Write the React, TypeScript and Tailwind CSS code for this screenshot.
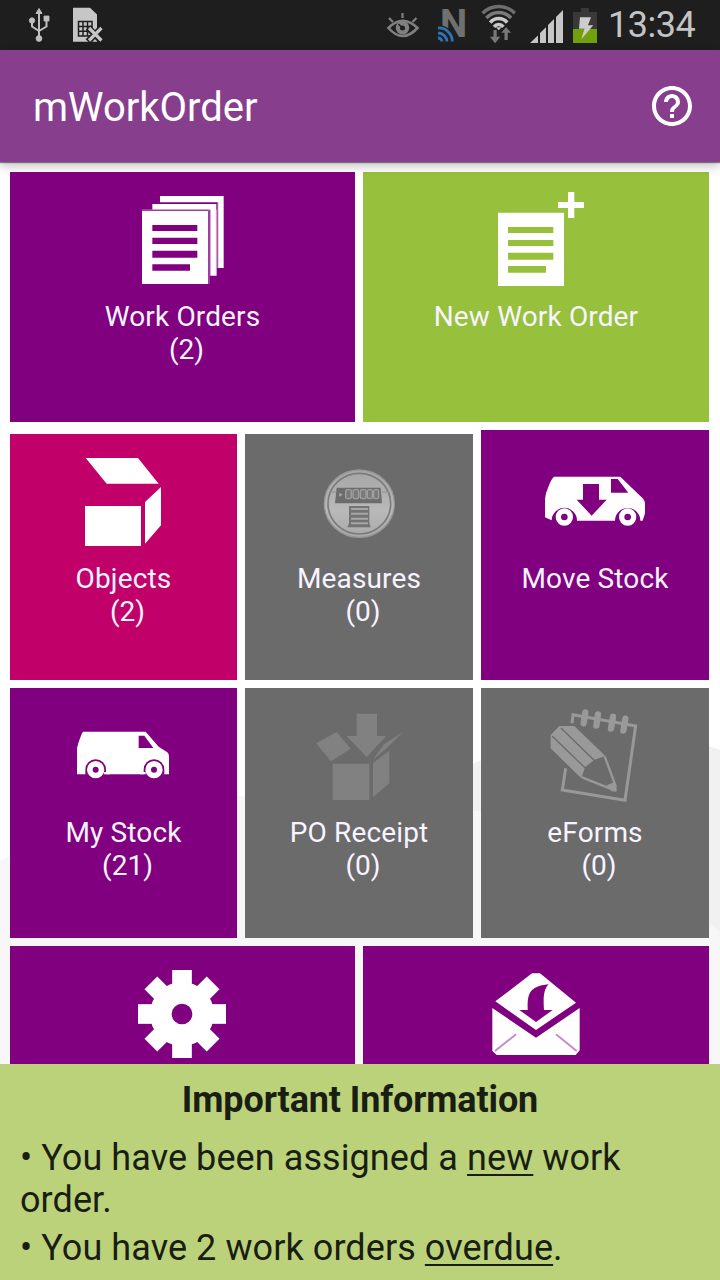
import type { ReactNode } from "react";

const THIRD = 1 / 3;

type ArtProps = { x: number; y: number; w: number; ox: number; oy: number; children: ReactNode };

/* Tile artwork, drawn at three units per pixel from the origin (ox, oy). */
function Art({ x, y, w, ox, oy, children }: ArtProps) {
  return (
    <svg className="block h-[120px] w-full shrink-0" viewBox={`${x} ${y} ${w} 120`} aria-hidden="true">
      <g transform={`translate(${ox} ${oy}) scale(${THIRD})`}>{children}</g>
    </svg>
  );
}

type TileProps = { className: string; label?: string; count?: number; tall?: boolean; art: ReactNode };

function Tile({ className, label, count, tall, art }: TileProps) {
  return (
    <button type="button" className={`flex flex-col items-stretch overflow-hidden text-center ${className}`}>
      {art}
      <span
        className={`block whitespace-nowrap text-[28px] leading-[33px] tracking-[0.15px] text-[#f8f4ff] ${tall ? "mt-[12px]" : "mt-[8px]"}`}
      >
        {label && <span className="block">{label}</span>}
        {count !== undefined && <span className="block pl-px tracking-normal">{"\u00a0"}({count})</span>}
      </span>
    </button>
  );
}

function StatusIcons() {
  return (
    <svg className="h-[50px] w-[230px]" viewBox="375 0 230 50" aria-hidden="true">
      <g stroke="#808080" fill="none" strokeWidth="2.6">
        <path d="M388.500 28 Q402.500 13.500 417.500 28 Q402.500 44 388.500 28Z" />
        <circle cx="402.500" cy="27.700" r="6.800" fill="#808080" stroke="none" />
        <path d="M389 18 l4 4 M402.500 13 v5 M416.500 18 l-4 4" strokeWidth="2.2" />
        <circle cx="402.500" cy="28" r="2.500" fill="#1e1e1e" stroke="none" />
        <path d="M398.500 24 l4 4" stroke="#1e1e1e" strokeWidth="1.600" />
      </g>
      <text x="440" y="36.500" fontSize="38.500" fontWeight="700" fill="#707070" fontFamily="Roboto, sans-serif">
        N
      </text>
      <path d="M437 25 A17 17 0 0 1 455 42 H437Z" fill="#1e1e1e" />
      <g fill="none" stroke="#2f73b5" strokeWidth="2.800">
        <path d="M438 28 A13.500 13.500 0 0 1 452.300 41.500" />
        <path d="M438 33 A8.800 8.800 0 0 1 447 41.500" />
        <path d="M438 38 A3.800 3.800 0 0 1 442 41.500" />
      </g>
      <g fill="none" strokeWidth="3.500">
        <path d="M482.600 13.200 A22.500 22.500 0 0 1 514.800 13.200" stroke="#6e6e6e" />
        <path d="M486.400 18 A16.500 16.500 0 0 1 511 18" stroke="#7a7a7a" />
        <path d="M490.200 22.600 A11 11 0 0 1 507.200 22.600" stroke="#c8c8c8" />
        <path d="M494 26.800 A6 6 0 0 1 503.400 26.800" stroke="#c8c8c8" />
      </g>
      <path d="M496 27.200 h5.600 l-2.800 3z" fill="#c8c8c8" />
      <path d="M493.500 30 h3.200 v6.800 h3.600 l-5.200 6.400 l-5.200 -6.400 h3.600z M504.500 40 h3.200 v-7.200 h3.200 l-4.800 -5.800 l-4.800 5.800 h3.200z" fill="#787878" />
      <path d="M530 43 L538 35.500 V43Z M540 43 V33 L546 27.200 V43Z M548 43 V25 L554 19 V43Z M556 43 V17 L563 10 V43Z" fill="#c6c6c6" />
      <path d="M573 12 h8 v-4 h8 v4 h8 v17 h-24z" fill="#393939" />
      <path d="M573 29 h24 v14 h-24z" fill="#72a00b" />
      <path d="M580 17.300 h11 l-3 8 h5.300 L581.300 39.300 l3.200 -10.600 h-5.500z" fill="#cdcdcd" />
    </svg>
  );
}

function UsbAndSim() {
  return (
    <svg className="h-[50px] w-[105px]" viewBox="0 0 105 50" aria-hidden="true">
      <g fill="#bfbfbf" stroke="#bfbfbf">
        <path d="M39 12 V37 M32 22 V26.500 L39 31 M46.500 20 V26.500 L39 31" fill="none" strokeWidth="2" />
        <path d="M39 8.500 l3 5 h-6z" strokeWidth="1" />
        <circle cx="32" cy="20.500" r="2.700" strokeWidth=".8" />
        <path d="M44 16 h5 v5 h-5z" strokeWidth=".8" />
        <circle cx="39" cy="38.500" r="2.900" strokeWidth=".8" />
      </g>
      <path d="M73 7.700 H90 L97 14.500 V41.700 H73Z" fill="#c6c6c6" />
      <path d="M78.500 21.500 h13.500 v14.500 h-13.500z M78.500 26.500 h13 M78.500 31.300 h13 M83 21.500 v14.500 M87.500 21.500 v14.500" fill="none" stroke="#1e1e1e" strokeWidth="1.500" />
      <path d="M88 27.500 L102 41.500 M102 27.500 L88 41.500" stroke="#1e1e1e" strokeWidth="6.500" />
      <path d="M89 28 L101.500 40.500 M101.500 28 L89 40.500" stroke="#c6c6c6" strokeWidth="3.200" />
    </svg>
  );
}

function WorkOrdersArt() {
  return (
    <Art x={10} y={172} w={345} ox={90} oy={180}>
      <path d="M210 48 H401 V264 H384 V67 H210Z M187 72 H379 V287 H361 V89 H187Z" fill="#fff" />
      <path d="M156 90 H357 V312" fill="none" stroke="#c07ac0" strokeWidth="3" />
      <path d="M384 67 V264 M379 89 V287" stroke="#d9aed9" strokeWidth="3" />
      <path d="M156 93 H354 V312 H156Z" fill="#fff" />
      <path d="M187 135 H322 V153 H187Z M187 173 H322 V192 H187Z M187 212 H322 V233 H187Z M187 253 H300 V272 H187Z" fill="#800080" />
    </Art>
  );
}

function NewOrderArt() {
  return (
    <Art x={363} y={172} w={346} ox={420} oy={180}>
      <path d="M234 98 H432 V318 H234Z M414 66 H444 V36 H463 V66 H492 V84 H463 V114 H444 V84 H414Z" fill="#fff" />
      <path d="M264 141 H400 V159 H264Z M264 180 H400 V198 H264Z M264 218 H400 V239 H264Z M264 258 H378 V278 H264Z" fill="#97c13c" />
    </Art>
  );
}

function ObjectsArt() {
  return (
    <Art x={10} y={434} w={227} ox={50} oy={430}>
      <path d="M107 84 H264 L326 161 H170Z M105 228 H273 V348 H105Z M285 216 L333 171 V286 L285 341Z" fill="#fff" />
    </Art>
  );
}

function MeasuresArt() {
  return (
    <Art x={245} y={434} w={228} ox={280} oy={430}>
      <defs>
        <linearGradient id="dial" x1="0" y1="0" x2="0" y2="1">
          <stop offset="0" stopColor="#a6a6a6" />
          <stop offset=".6" stopColor="#b9b9b9" />
          <stop offset="1" stopColor="#a9a9a9" />
        </linearGradient>
      </defs>
      <ellipse cx="238" cy="221" rx="105" ry="101" fill="url(#dial)" stroke="#979797" strokeWidth="4" />
      <ellipse cx="238" cy="221" rx="94" ry="91" fill="none" stroke="#7c7c7c" strokeWidth="5" />
      <path d="M152 186 H168 M306 186 H326" stroke="#999" strokeWidth="4" />
      <path d="M170 173 H302 L306 220 H165Z" fill="#6c6c6c" />
      <path d="M178 188 l10 6 l-10 6z" fill="#aaa" />
      <g fill="#7a7a7a" stroke="#a0a0a0" strokeWidth="4">
        <rect x="197" y="179" width="17" height="27" rx="5" />
        <rect x="219" y="179" width="17" height="27" rx="5" />
        <rect x="241" y="179" width="17" height="27" rx="5" />
        <rect x="262" y="179" width="15" height="27" rx="5" />
        <rect x="281" y="179" width="15" height="27" rx="5" />
      </g>
      <path d="M207 228 H268 V280 L272 292 H202 L207 280Z" fill="#737373" />
      <path d="M213 237 H264 M213 251 H264 M213 266 H264 M213 280 H264" stroke="#a6a6a6" strokeWidth="6" />
    </Art>
  );
}

function MoveStockArt() {
  return (
    <Art x={481} y={430} w={228} ox={480} oy={430}>
      <path d="M222 140 H421 L484 201 Q495 210 495 222 V250 L488 272 H481 A38 38 0 0 0 405 272 H291 A38 38 0 0 0 215 271 L195 262 V207 Q196 190 205 171 Q214 146 222 140Z" fill="#fff" />
      <path d="M393 147 H413 L445 188 H393Z M309 162 H357 V209 H380 L335 257 L290 209 H309Z" fill="#800080" />
      <g fill="none" stroke="#fff" strokeWidth="16">
        <circle cx="253" cy="261" r="18" />
        <circle cx="443" cy="261" r="18" />
      </g>
    </Art>
  );
}

function MyStockArt() {
  return (
    <Art x={10} y={688} w={227} ox={0} oy={680}>
      <path d="M250 155 H437 L476 200 L502 217 Q507 221 507 230 V283 H231 V204 Q235 186 243 167 Q246 157 250 155Z" fill="#fff" />
      <path d="M416 167 H433 L460 204 H416Z M256 284 V269 A31 31 0 0 1 318 269 V284Z M431 284 V269 A31 31 0 0 1 493 269 V284Z" fill="#800080" />
      <path d="M312 276 H330 V283 H312Z M420 276 H437 V283 H420Z" fill="#fff" />
      <g fill="none" stroke="#fff" strokeWidth="17">
        <circle cx="287" cy="269" r="17.500" />
        <circle cx="462" cy="269" r="17.500" />
      </g>
    </Art>
  );
}

function ReceiptArt() {
  return (
    <Art x={245} y={688} w={228} ox={240} oy={680}>
      <path
        d="M228 190 L290 156 L332 206 L273 244Z M350 101 H411 V168 H439 L380 231 L320 168 H350Z M398 240 L432 193 L488 156 L440 205Z M278 251 H388 V360 H278Z M399 249 L448 212 V309 L399 352Z"
        fill="#818181"
      />
    </Art>
  );
}

function FormsArt() {
  return (
    <Art x={481} y={688} w={228} ox={470} oy={680}>
      <g stroke="#999" fill="none">
        <path d="M306 130 L309 104 L497 138 L465 361 L277 330 L287 265" strokeWidth="9" />
        <path d="M346 97 L341 130 M384 103 L379 137 M429 110 L423 146 M466 116 L460 152" strokeWidth="19" strokeLinecap="round" />
        <path d="M404 229 L437 318 L434 331 L336 292" strokeWidth="7" />
      </g>
      <path d="M268 138 H313 L406 228 L372 240 L345 262 L334 295 L242 205 V165Z M410 316 L434 306 L441 334 H424Z" fill="#999" />
      <path d="M273 144 L374 242 M246 168 L346 264" stroke="#6b6b6b" strokeWidth="4" />
    </Art>
  );
}

const TEETH = [0, 45, 90, 135, 180, 225, 270, 315];

function SettingsArt() {
  return (
    <Art x={10} y={946} w={345} ox={0} oy={930}>
      <g fill="#fff">
        <circle cx="546" cy="252" r="96" />
        {TEETH.map((a) => (
          <rect key={a} x={a % 90 ? 519 : 516.5} y="120" width={a % 90 ? 54 : 59} height="70" transform={`rotate(${a} 546 252)`} />
        ))}
      </g>
      <circle cx="546" cy="252" r="31" fill="#800080" />
    </Art>
  );
}

function MailArt() {
  return (
    <Art x={363} y={946} w={346} ox={360} oy={930}>
      <path d="M516 130 H540 L648 218 L528 300 L406 214Z M397 234 L528 323 L659 234 V361 L647 375 H410 L397 363Z" fill="#fff" />
      <path d="M566 163 C549 180 550 210 552 240 H578 L528 276 L478 240 H503 C503 200 501 169 566 163Z" fill="#800080" />
      <path d="M405 363 L468 313 M650 363 L588 313" stroke="#c88ac8" strokeWidth="6" />
    </Art>
  );
}

export default function App() {
  return (
    <div className="relative isolate flex h-[1280px] w-[720px] flex-col overflow-hidden bg-white font-['Roboto',sans-serif]">
      <svg className="absolute inset-0 -z-10 h-full w-full" viewBox="0 0 720 1280" aria-hidden="true">
        <path d="M0 861 Q110 797 241 796 L480 796 L720 850 V1280 H0Z" fill="#f7f7f7" />
        <path d="M440 780 Q590 700 720 750 V932 Q600 830 440 804Z" fill="#f1f1f1" />
      </svg>

      <header className="flex h-[50px] shrink-0 items-center bg-[#1e1e1e]">
        <UsbAndSim />
        <span className="flex-1" />
        <StatusIcons />
        <span className="w-[115px] pl-[3px] text-[36px] leading-[50px] tracking-[-0.5px] text-[#c4c4c4]">13:34</span>
      </header>

      <div className="z-10 flex h-28 shrink-0 items-center justify-between bg-[#873e8d] pr-6 pl-[33px] shadow-[0_1px_1px_rgba(0,0,0,0.45),0_4px_10px_rgba(0,0,0,0.24)]">
        <h1 className="pt-1 text-[40px] leading-[48px] text-white">mWorkOrder</h1>
        <svg className="h-12 w-12" viewBox="0 0 24 24" fill="#fff" aria-label="Help">
          <path d="M11 18h2v-2h-2v2zm1-16C6.480 2 2 6.480 2 12s4.480 10 10 10 10-4.480 10-10S17.520 2 12 2zm0 18c-4.410 0-8-3.590-8-8s3.590-8 8-8 8 3.590 8 8-3.590 8-8 8zm0-14c-2.210 0-4 1.790-4 4h2c0-1.100.9-2 2-2s2 .9 2 2c0 2-3 1.750-3 5h2c0-2.250 3-2.500 3-5 0-2.210-1.790-4-4-4z" />
        </svg>
      </div>

      <main className="flex min-h-0 flex-1 flex-col gap-2 overflow-hidden pt-[10px] pr-[11px] pl-[10px]">
        <div className="grid h-[250px] shrink-0 grid-cols-[345px_346px] gap-2">
          <Tile className="bg-[#800080]" label="Work Orders" count={2} art={<WorkOrdersArt />} />
          <Tile className="bg-[#97c13c]" label="New Work Order" art={<NewOrderArt />} />
        </div>
        <div className="grid h-[250px] shrink-0 grid-cols-[227px_228px_228px] items-end gap-2">
          <Tile className="h-[246px] bg-[#c2006a]" label="Objects" count={2} art={<ObjectsArt />} />
          <Tile className="h-[246px] bg-[#6b6b6b]" label="Measures" count={0} art={<MeasuresArt />} />
          <Tile className="h-[250px] bg-[#800080]" label="Move Stock" tall art={<MoveStockArt />} />
        </div>
        <div className="grid h-[250px] shrink-0 grid-cols-[227px_228px_228px] gap-2">
          <Tile className="bg-[#800080]" label="My Stock" count={21} art={<MyStockArt />} />
          <Tile className="bg-[#6b6b6b]" label="PO Receipt" count={0} art={<ReceiptArt />} />
          <Tile className="bg-[#6b6b6b]" label="eForms" count={0} art={<FormsArt />} />
        </div>
        <div className="grid h-[250px] shrink-0 grid-cols-[345px_346px] gap-2">
          <Tile className="bg-[#800080]" art={<SettingsArt />} />
          <Tile className="bg-[#800080]" art={<MailArt />} />
        </div>
      </main>

      <footer className="h-[216px] shrink-0 bg-[#bbd27b] px-5 pt-[15px] text-[36px] leading-[42px] tracking-[0.08px] text-[#1a1e12]">
        <h2 className="text-center font-bold tracking-[-0.12px]">Important Information</h2>
        <p className="mt-4">
          • You have been assigned a <u className="decoration-2 underline-offset-4">new</u> work
          <br />
          order.
        </p>
        <p className="mt-[6px]">
          • You have 2 work orders <u className="decoration-2 underline-offset-4">overdue</u>.
        </p>
      </footer>
    </div>
  );
}
